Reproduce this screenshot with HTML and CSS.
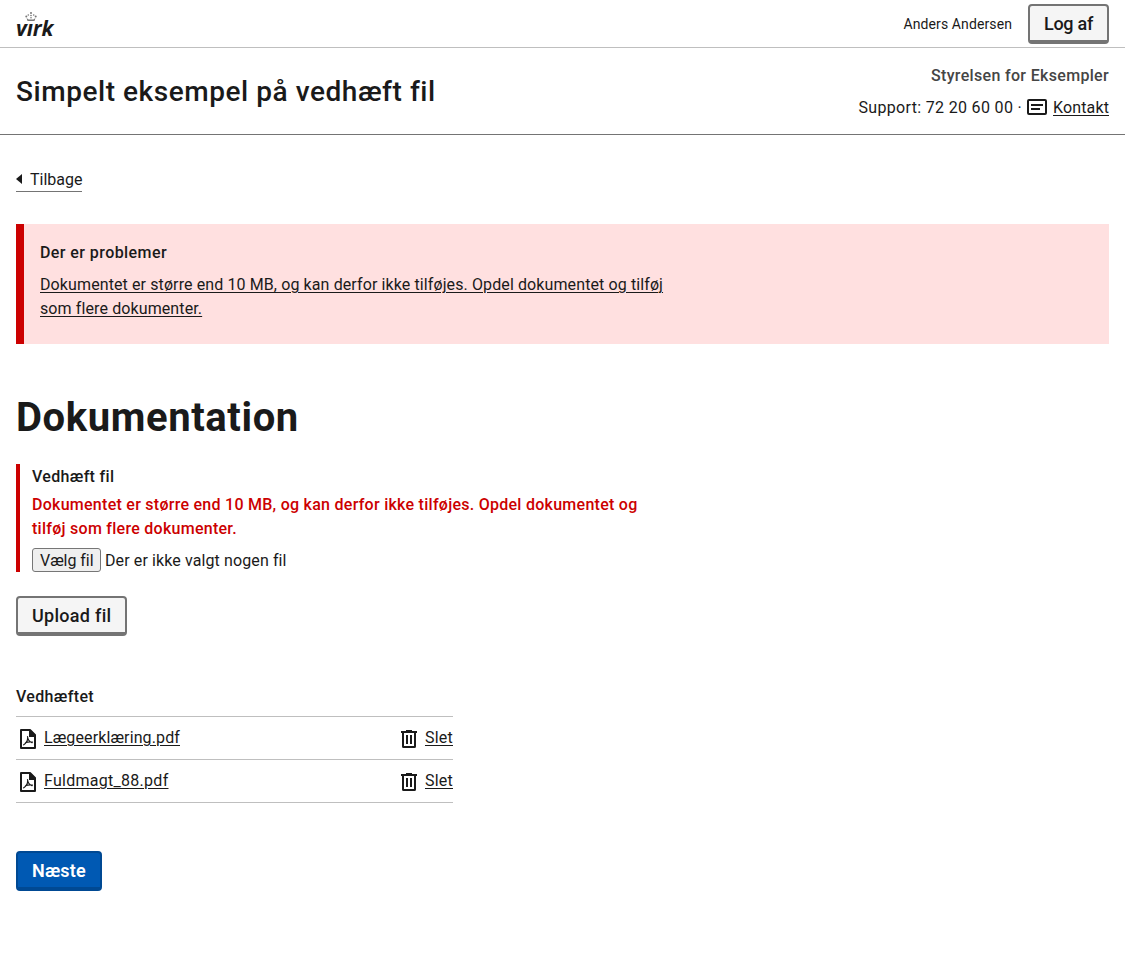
FILE: index.html
```html
<!DOCTYPE html>
<html lang="da">
<head>
<meta charset="utf-8">
<title>Simpelt eksempel på vedhæft fil</title>
<link rel="stylesheet" href="styles.css">
</head>
<body>
<svg class="sprite" aria-hidden="true">
  <symbol id="pdf" viewBox="0 0 24 24">
    <path fill="none" stroke="currentColor" stroke-width="2" stroke-linejoin="round" d="M5 3h9l5 5v13H5z"/>
    <path fill="currentColor" d="M13 3h1.500L20 8.500V10h-7z"/>
    <path fill="none" stroke="currentColor" stroke-width="1.2" stroke-linecap="round" stroke-linejoin="round" d="M11.500 9.500c.2 3 1.300 4.800 4.500 6.200M11.700 10.500c0 3-1.700 5.700-4 7.300M9.500 15.700c2-.8 4-1 7-.7"/>
  </symbol>
  <symbol id="trash" viewBox="0 0 24 24">
    <path fill="currentColor" d="M9 3h6v1h5v2h-1v13.500a1.500 1.500 0 0 1-1.500 1.500h-11A1.500 1.500 0 0 1 5 19.500V6H4V4h5zM7 6v13h10V6zM9 8h2v9H9zM13 8h2v9h-2z" fill-rule="evenodd"/>
  </symbol>
</svg>

<header>
  <div class="portal">
    <div class="logo">
      <svg class="crown" viewBox="0 0 12 10" fill="#777">
        <circle cx="6" cy="1" r="1"/><circle cx="3.300" cy="3" r=".8"/><circle cx="8.700" cy="3" r=".8"/><circle cx="1.300" cy="4.600" r="1"/><circle cx="10.700" cy="4.600" r="1"/><circle cx="6" cy="3.500" r=".8"/><circle cx="6" cy="5.700" r=".8"/><path d="M1.600 6l2 1.400h4.800L10.400 6l-.9 3H2.500z"/>
      </svg>
      <span class="wordmark">vırk</span>
    </div>
    <div class="session">
      <span class="user">Anders Andersen</span>
      <button class="button secondary logout">Log af</button>
    </div>
  </div>
  <div class="solution">
    <p class="solution-title">Simpelt eksempel på vedhæft fil</p>
    <div class="authority">
      <p class="authority-name">Styrelsen for Eksempler</p>
      <p class="support"><span class="support-number">Support: 72 20 60 00 ·</span>
        <svg class="mail" viewBox="0 0 20 16" fill="none" stroke="currentColor" stroke-width="2"><rect x="1" y="1" width="18" height="14" rx="1"/><path d="M4 6h12M4 10h9"/></svg>
        <a class="contact" href="#">Kontakt</a></p>
    </div>
  </div>
</header>

<main>
  <a class="back" href="#"><svg class="arrow" viewBox="0 0 6 10" fill="currentColor"><path d="M6 0v10L0 5z"/></svg><span>Tilbage</span></a>

  <section class="alert">
    <h2 class="alert-title">Der er problemer</h2>
    <a class="alert-link" href="#">Dokumentet er større end 10 MB, og kan derfor ikke tilføjes. Opdel dokumentet og tilføj<br>som flere dokumenter.</a>
  </section>

  <h1>Dokumentation</h1>

  <div class="field">
    <label class="label">Vedhæft fil</label>
    <p class="error">Dokumentet er større end 10 MB, og kan derfor ikke tilføjes. Opdel dokumentet og<br>tilføj som flere dokumenter.</p>
    <div class="file"><button class="choose">Vælg fil</button><span class="file-status">Der er ikke valgt nogen fil</span></div>
  </div>

  <button class="button secondary upload">Upload fil</button>

  <h2 class="attached-title">Vedhæftet</h2>
  <ul class="attached">
    <li><svg class="icon"><use href="#pdf"/></svg><a class="name" href="#">Lægeerklæring.pdf</a><svg class="icon"><use href="#trash"/></svg><a class="delete" href="#">Slet</a></li>
    <li><svg class="icon"><use href="#pdf"/></svg><a class="name wide" href="#">Fuldmagt_88.pdf</a><svg class="icon"><use href="#trash"/></svg><a class="delete" href="#">Slet</a></li>
  </ul>

  <button class="button primary">Næste</button>
</main>
</body>
</html>
```
FILE: styles.css
```css
* { box-sizing: border-box; }
body { margin: 0; background: #fff; color: #1a1a1a; font: 400 16px/24px Roboto, "Liberation Sans", sans-serif; letter-spacing: .108px; }
h1, h2, p, ul { margin: 0; padding: 0; }
a { color: inherit; text-decoration: underline; text-decoration-thickness: 1px; text-underline-offset: 2px; }
button { font-family: inherit; color: inherit; white-space: nowrap; }
svg { display: block; flex: none; }
.sprite { position: absolute; width: 0; height: 0; }

.portal { display: flex; justify-content: space-between; height: 48px; padding: 0 16px; border-bottom: 1px solid #bfbfbf; }
.logo { width: 38px; padding-top: 12px; }
.crown { width: 12px; height: 10px; margin-left: 9px; }
.wordmark { display: block; margin-top: -7px; font: italic 700 21px/26px "Open Sans", sans-serif; letter-spacing: -.1px; }
.session { display: flex; align-items: center; gap: 16px; }
.user { font-size: 14px; letter-spacing: .104px; }

.button { display: block; height: 40px; padding: 2px 14px 0; border-radius: 4px; font-size: 18px; line-height: 32px; font-weight: 500; }
.secondary { background: #f5f5f5; border: 2px solid #747474; border-bottom-width: 4px; }
.logout { width: 81px; letter-spacing: -.28px; }
.upload { width: 111px; margin-top: 24px; letter-spacing: .287px; }
.primary { width: 86px; margin-top: 48px; border: 2px solid #004993; border-bottom-width: 4px; background: #0059b3; color: #fff; font-weight: 600; letter-spacing: .21px; }

.solution { display: flex; justify-content: space-between; height: 87px; padding: 16px 16px 0; border-bottom: 1px solid #747474; }
.solution-title { padding-top: 10px; font-size: 28px; line-height: 36px; font-weight: 500; letter-spacing: .55px; }
.authority { text-align: right; }
.authority-name { color: #454545; font-weight: 500; letter-spacing: .327px; }
.support { display: flex; align-items: center; margin-top: 8px; }
.support-number { letter-spacing: .33px; }
.mail { width: 20px; height: 16px; margin: -2px 6px 0 5px; }
.contact { letter-spacing: .13px; }

main { padding: 33px 16px 0; }
.back { display: flex; align-items: center; gap: 8px; width: 66px; height: 24px; border-bottom: 1px solid #747474; text-decoration: none; letter-spacing: 0; }
.arrow { width: 6px; height: 10px; margin-top: -1px; }

.alert { height: 120px; margin-top: 32px; padding: 17px 16px 15px; border-left: 8px solid #c00; background: #ffe0e0; }
.alert-title { margin-bottom: 8px; font-size: 16px; font-weight: 500; letter-spacing: .426px; }
h1 { margin-top: 48px; padding-top: 4px; font-size: 40px; line-height: 44px; font-weight: 700; letter-spacing: .6px; }

.field { height: 108px; margin-top: 24px; padding: 1px 0 0 12px; border-left: 4px solid #c00; }
.label { display: block; font-weight: 500; letter-spacing: .331px; }
.error { margin: 4px 0 7px; color: #c00; font-weight: 500; letter-spacing: .266px; }
.file { display: flex; gap: 4px; }
.choose { width: 69px; height: 24px; padding: 1px 7px 0; border: 1px solid #767676; border-radius: 3px; background: #efefef; font-size: 16px; line-height: 21px; letter-spacing: -.04px; }
.file-status { padding-top: 1px; line-height: 23px; }

.attached-title { margin: 49px 0 7px; font-size: 16px; font-weight: 500; letter-spacing: .349px; }
.attached { width: 437px; border-top: 1px solid #bfbfbf; list-style: none; }
.attached li { display: flex; height: 43px; padding-top: 9px; border-bottom: 1px solid #bfbfbf; }
.icon { width: 24px; height: 24px; margin: 1px 4px 0 0; }
.name { margin-right: auto; letter-spacing: .12px; }
.wide { letter-spacing: .276px; }
.delete { letter-spacing: .223px; }
```
